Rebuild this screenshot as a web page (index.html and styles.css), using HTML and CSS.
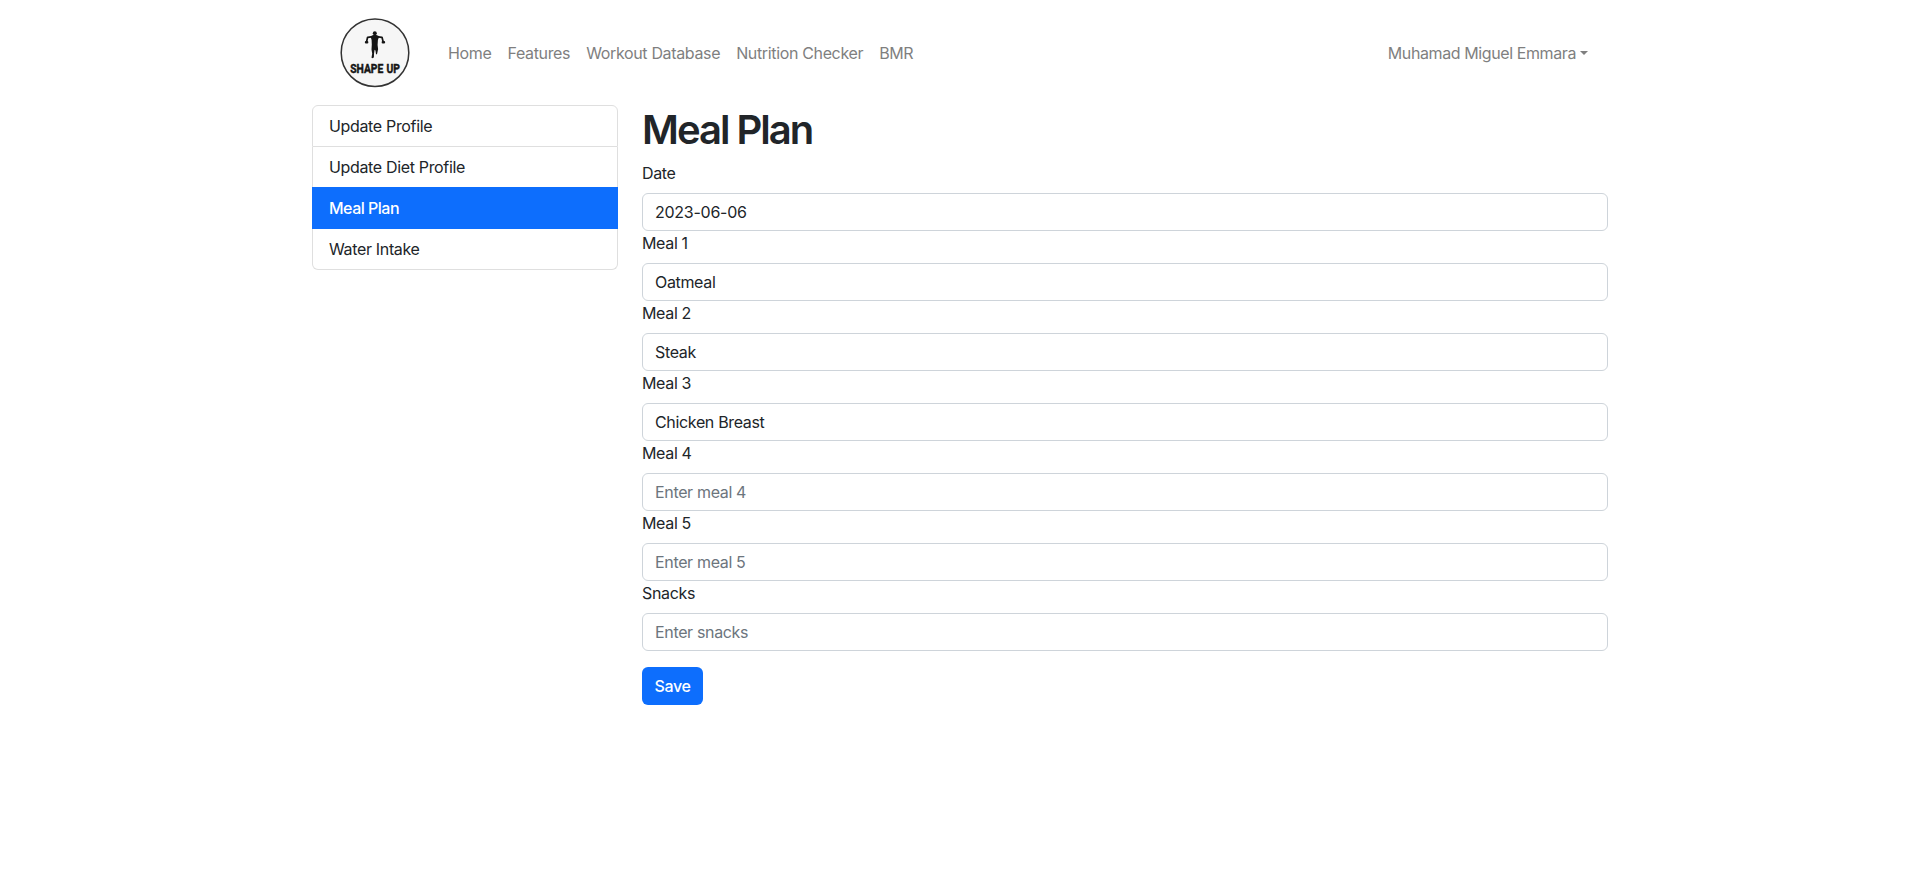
FILE: index.html
```html
<!DOCTYPE html>
<html lang="en">
<head>
<meta charset="utf-8">
<title>Meal Plan</title>
<link rel="stylesheet" href="styles.css">
</head>
<body>
<div class="container">
  <nav class="navbar">
    <a class="brand" href="#">
      <svg width="70" height="70" viewBox="0 0 70 70" role="img" aria-label="Shape Up">
        <circle cx="35" cy="34.7" r="33.8" fill="#f6f6f6" stroke="#333" stroke-width="1.5"/>
        <g fill="none" stroke="#151515" stroke-linecap="round" stroke-linejoin="round">
          <path d="M26.7 23.2 27.6 19.3 33 18.7M43 23.2 42 19.3 36 18.7" stroke-width="1.7"/>
          <path d="M26 24.2h1.2M42.8 24.2h1.2" stroke-width="2.4"/>
        </g>
        <circle cx="34.8" cy="15.2" r="2" fill="#151515"/>
        <path d="M30.5 18.3 33.4 17h2.9l3 1.3-1.4 3.7-.3 5 .5 4.2-1.1 5h-1l-.5-3.6-.9-.8-.6 4-.1 3.4-1.1 1-1.3-.5.7-4.2-.7-4 .3-5-.2-4.5z" fill="#151515"/>
        <text class="logo-text" x="10.2" y="55.2" textLength="49.8" lengthAdjust="spacingAndGlyphs">SHAPE UP</text>
      </svg>
    </a>
    <ul class="nav">
      <li><a href="#">Home</a></li>
      <li><a href="#">Features</a></li>
      <li><a href="#">Workout Database</a></li>
      <li><a href="#">Nutrition Checker</a></li>
      <li><a href="#">BMR</a></li>
    </ul>
    <a class="user" href="#">Muhamad Miguel Emmara<span class="caret"></span></a>
  </nav>
  <div class="row">
    <aside class="list">
      <a class="item" href="#">Update Profile</a>
      <a class="item" href="#">Update Diet Profile</a>
      <a class="item active" href="#">Meal Plan</a>
      <a class="item" href="#">Water Intake</a>
    </aside>
    <main class="content">
      <h1>Meal Plan</h1>
      <form>
        <label for="date">Date</label>
        <input id="date" class="date" type="text" value="2023-06-06">
        <label for="m1">Meal 1</label>
        <input id="m1" type="text" value="Oatmeal">
        <label for="m2">Meal 2</label>
        <input id="m2" type="text" value="Steak">
        <label for="m3">Meal 3</label>
        <input id="m3" type="text" value="Chicken Breast">
        <label for="m4">Meal 4</label>
        <input id="m4" type="text" placeholder="Enter meal 4">
        <label for="m5">Meal 5</label>
        <input id="m5" type="text" placeholder="Enter meal 5">
        <label for="snacks">Snacks</label>
        <input id="snacks" type="text" placeholder="Enter snacks">
        <button type="button">Save</button>
      </form>
    </main>
  </div>
</div>
</body>
</html>
```
FILE: styles.css
```css
*{box-sizing:border-box}
body{margin:0;background:#fff;color:#212529;font:400 16px/24px Inter,"Liberation Sans",sans-serif;letter-spacing:-.34px}
a{color:inherit;text-decoration:none}
.container{width:1320px;margin:0 auto;padding:0 12px}
.navbar{display:flex;align-items:center;height:105px;padding:0 20px 0 28px;color:#7f7f7f;letter-spacing:-.35px}
.brand{display:block;width:70px;height:70px;margin-right:30px}
.brand svg{display:block;overflow:visible}
.logo-text{font:700 13.4px "Roboto","Liberation Sans",sans-serif;letter-spacing:0;word-spacing:1px;fill:#151515;stroke:#151515;stroke-width:.5px}
.nav{display:flex;margin:0;padding:0;list-style:none}
.nav a{display:block;padding:8px}
.user{display:flex;align-items:center;margin-left:auto;letter-spacing:-.4px}
.caret{margin-left:4px;border-top:4.8px solid;border-right:4.8px solid transparent;border-left:4.8px solid transparent}
.row{display:flex;gap:24px;align-items:flex-start}
.list{flex:0 0 306px;border-radius:6px}
.item{display:block;padding:8px 16px;border:1px solid #dfdfdf;border-top-width:0}
.item:first-child{border-top-width:1px;border-radius:6px 6px 0 0}
.item:last-child{border-radius:0 0 6px 6px}
.active{margin-top:-1px;border-top-width:1px;border-color:#0d6efd;background:#0d6efd;color:#fff;font-weight:500;letter-spacing:-.5px}
.content{flex:1}
h1{margin:0 0 7px;padding-top:1px;font-size:40px;line-height:48px;font-weight:600;letter-spacing:-2px}
label{display:block;margin-bottom:8px}
input{display:block;width:100%;height:38px;padding:6px 12px;border:1px solid #ced4da;border-radius:6px;background:#fff;color:#212529;font:inherit;letter-spacing:inherit}
.date{letter-spacing:-.25px}
input::placeholder{color:#6c757d;opacity:1}
button{display:block;width:61px;height:38px;margin-top:16px;padding:0;border:0;border-radius:6px;background:#0d6efd;color:#fff;font:inherit;font-weight:500;letter-spacing:-.4px}
```
